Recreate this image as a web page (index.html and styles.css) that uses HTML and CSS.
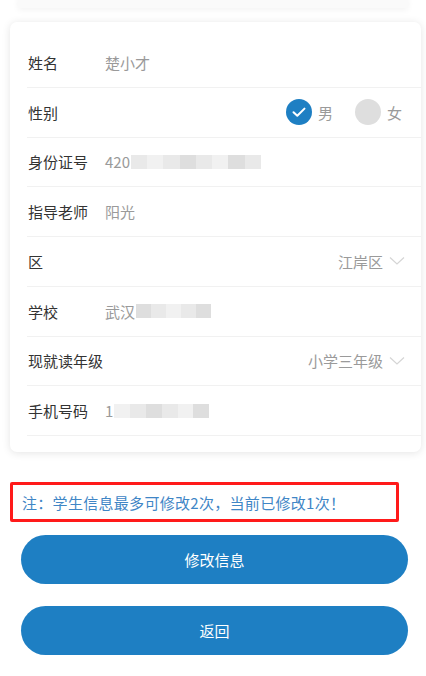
FILE: index.html
```html
<!DOCTYPE html>
<html lang="zh">
<head>
<meta charset="utf-8">
<link rel="stylesheet" href="styles.css">
</head>
<body>
<div class="prev"></div>
<div class="card">
  <div class="row"><span class="label">姓名</span><span class="value">楚小才</span></div>
  <div class="row">
    <span class="label">性别</span>
    <div class="radios">
      <span class="radio on"><svg viewBox="0 0 26 26" width="26" height="26"><circle cx="13" cy="13" r="13" fill="#1e7fc3"/><path d="M7.5 13.2 L11.3 16.8 L18.5 9.6" fill="none" stroke="#fff" stroke-width="2" stroke-linecap="round" stroke-linejoin="round"/></svg>男</span>
      <span class="radio"><span class="dot"></span>女</span>
    </div>
  </div>
  <div class="row"><span class="label">身份证号</span><span class="value">420<span class="mosaic w130"><i></i><i class="a"></i><i></i><i class="b"></i><i></i><i class="a"></i><i class="b"></i><i></i></span></span></div>
  <div class="row"><span class="label">指导老师</span><span class="value">阳光</span></div>
  <div class="row"><span class="label">区</span><span class="pick">江岸区<svg class="chev" viewBox="0 0 16 10" width="16" height="10"><path d="M1 1.5 L8 8 L15 1.5" fill="none" stroke="#d5d5d5" stroke-width="1.2"/></svg></span></div>
  <div class="row"><span class="label">学校</span><span class="value">武汉<span class="mosaic w75"><i class="b"></i><i></i><i class="a"></i><i></i><i class="b"></i></span></span></div>
  <div class="row"><span class="label">现就读年级</span><span class="pick">小学三年级<svg class="chev" viewBox="0 0 16 10" width="16" height="10"><path d="M1 1.5 L8 8 L15 1.5" fill="none" stroke="#d5d5d5" stroke-width="1.2"/></svg></span></div>
  <div class="row"><span class="label">手机号码</span><span class="value">1<span class="mosaic w95"><i class="a"></i><i></i><i class="b"></i><i></i><i class="a"></i><i class="b"></i></span></span></div>
</div>
<div class="note">注：学生信息最多可修改2次，当前已修改1次！</div>
<div class="actions">
  <button class="btn">修改信息</button>
  <button class="btn">返回</button>
</div>
</body>
</html>
```
FILE: styles.css
```css
html, body { margin: 0; padding: 0; background: #fff; }
body {
  font-family: "Noto Sans CJK SC", "Noto Sans", sans-serif;
  width: 426px;
  height: 676px;
  overflow: hidden;
}
.prev {
  height: 12px;
  margin: -4px 18px 0;
  background: #fafafa;
  box-shadow: 0 2px 6px rgba(0,0,0,0.05);
}
.card {
  margin: 14px 5px 0 10px;
  background: #fff;
  border-radius: 7px;
  box-shadow: 0 1px 8px rgba(0,0,0,0.11);
  padding: 16px 0 16px 0;
}
.row {
  height: 49.75px;
  box-sizing: border-box;
  margin-left: 17px;
  padding-left: 1px;
  padding-right: 16px;
  border-bottom: 1px solid #f1f1f1;
  display: flex;
  align-items: center;
  font-size: 15px;
}
.label {
  color: #333;
  width: 77px;
  flex: none;
}
.value {
  color: #9a9a9a;
  display: flex;
  align-items: center;
}
.mosaic {
  display: inline-flex;
  height: 14px;
  margin-left: 1px;
}
.mosaic i {
  flex: 1;
  background: #e9e9e9;
}
.mosaic i.a { background: #f1f1f1; }
.mosaic i.b { background: #dedede; }
.w130 { width: 130px; }
.w75 { width: 75px; }
.w95 { width: 95px; }
.radios {
  margin-left: auto;
  margin-right: 3px;
  display: flex;
  align-items: center;
  gap: 22px;
}
.radio {
  display: flex;
  align-items: center;
  gap: 6px;
  color: #9a9a9a;
}
.radio svg { display: block; }
.dot {
  width: 26px;
  height: 26px;
  border-radius: 50%;
  background: #dedede;
}
.pick {
  margin-left: auto;
  color: #9a9a9a;
  display: flex;
  align-items: center;
  gap: 6px;
}
.chev { display: block; }
.note {
  margin: 30px 0 0 10px;
  width: 374px;
  height: 34px;
  border: 3px solid #ff1a1a;
  border-radius: 2px;
  color: #3f86c6;
  font-size: 15px;
  letter-spacing: 0.3px;
  display: flex;
  align-items: center;
  padding-left: 9px;
}
.actions {
  display: flex;
  flex-direction: column;
  gap: 22px;
  margin: 13px 18px 0 21px;
}
.btn {
  height: 49px;
  border: none;
  border-radius: 25px;
  background: #1e7fc3;
  color: #fff;
  font-family: inherit;
  font-size: 15px;
  padding: 0;
}
```
